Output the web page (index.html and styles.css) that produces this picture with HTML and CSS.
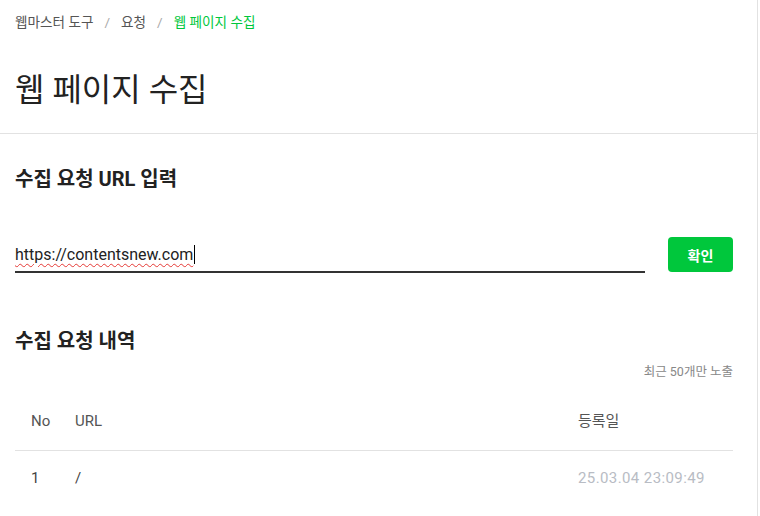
FILE: index.html
```html
<!DOCTYPE html>
<html lang="ko">
<head>
<meta charset="utf-8">
<link rel="stylesheet" href="styles.css">
</head>
<body>
<div class="page">
  <header class="head">
    <nav class="crumbs">
      <span>웹마스터 도구</span><span class="sep">/</span><span>요청</span><span class="sep">/</span><span class="cur">웹 페이지 수집</span>
    </nav>
    <h1 class="title">웹 페이지 수집</h1>
  </header>
  <main class="body">
    <h2 class="sec">수집 요청 URL 입력</h2>
    <div class="form">
      <div class="field"><span class="val">https://contentsnew.com</span><span class="caret"></span></div>
      <button class="btn">확인</button>
    </div>
    <h2 class="sec sec2">수집 요청 내역</h2>
    <div class="note">최근 50개만 노출</div>
    <div class="table">
      <div class="row thead"><span class="c-no">No</span><span class="c-url">URL</span><span class="c-date">등록일</span></div>
      <div class="row tbody"><span class="c-no">1</span><span class="c-url">/</span><span class="c-date date">25.03.04 23:09:49</span></div>
    </div>
  </main>
</div>
</body>
</html>
```
FILE: styles.css
```css
html, body { margin: 0; padding: 0; background: #fff; }
body { font-family: "Roboto", "Noto Sans CJK KR", sans-serif; color: #222; }
.page { width: 757px; border-right: 1px solid #e2e2e2; min-height: 516px; }
.head { border-bottom: 1px solid #e2e2e2; padding: 12px 15px 0; height: 134px; box-sizing: border-box; }
.crumbs { font-size: 13.6px; color: #555; display: flex; line-height: 20px; }
.crumbs .sep { color: #aaa; margin: 0 11px; }
.crumbs .cur { color: #00c73c; }
.title { font-size: 32px; font-weight: 400; margin: 36px 0 0; line-height: 44px; color: #222; }
.body { padding: 0 24px 0 15px; }
.sec { font-size: 20px; font-weight: 700; margin: 0; line-height: 28px; padding-top: 31px; color: #222; }
.form { display: flex; align-items: flex-end; margin-top: 44px; gap: 23px; }
.field { flex: 0 0 630px; border-bottom: 2px solid #333; height: 36px; box-sizing: border-box; display: flex; align-items: center; font-size: 16px; color: #222; }
.val { text-decoration: underline wavy #e53935; text-decoration-thickness: 1px; text-underline-offset: 3px; }
.caret { display: inline-block; width: 1px; height: 19px; background: #000; margin-left: 1px; }
.btn { width: 65px; height: 35px; margin-bottom: 1px; background: #00c73c; color: #fff; border: 0; border-radius: 4px; font-family: inherit; font-size: 14px; font-weight: 700; padding: 0; }
.sec2 { padding-top: 54px; }
.note { text-align: right; font-size: 12.5px; color: #888; margin-top: 8px; line-height: 18px; }
.table { margin-top: 30px; }
.row { display: flex; font-size: 15px; line-height: 20px; }
.thead { height: 39px; border-bottom: 1px solid #e2e2e2; color: #555; }
.tbody { padding-top: 17px; color: #444; }
.c-no { width: 44px; padding-left: 16px; box-sizing: border-box; }
.c-url { flex: 1; padding-left: 16px; }
.c-date { width: 155px; }
.date { color: #b8bcc4; letter-spacing: 0.4px; }
```
